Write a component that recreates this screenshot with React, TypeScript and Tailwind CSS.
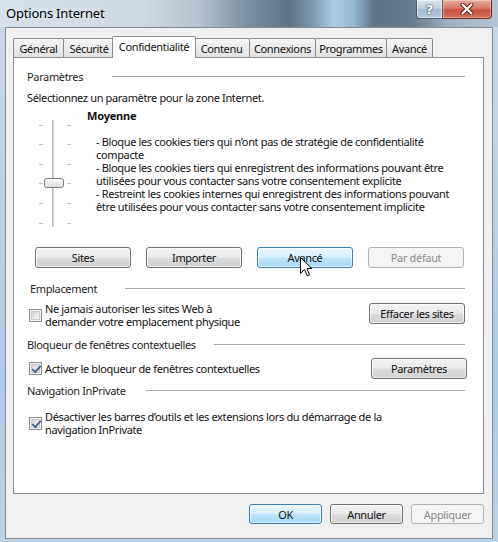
import React from "react";

const FONT = "font-['Noto_Sans',sans-serif]";

type BtnVariant = "normal" | "focus" | "disabled";

function Btn({
  children,
  w,
  h = "h-[21px]",
  variant = "normal",
  extra = "",
}: {
  children: React.ReactNode;
  w: string;
  h?: string;
  variant?: BtnVariant;
  extra?: string;
}) {
  const base = `${w} ${h} rounded-[3px] border flex items-center justify-center shrink-0 whitespace-nowrap ${extra}`;
  if (variant === "focus")
    return (
      <div
        className={`${base} border-[#3c7fb1] bg-[linear-gradient(#eaf6fd_0%,#d9f0fc_48%,#bee6fd_52%,#a7d9f5_100%)] shadow-[inset_0_0_0_1px_rgba(255,255,255,0.6)] text-[#111]`}
      >
        {children}
      </div>
    );
  if (variant === "disabled")
    return (
      <div className={`${base} border-[#adb2b5] bg-[#f4f4f4] text-[#8a8a8a]`}>
        {children}
      </div>
    );
  return (
    <div
      className={`${base} border-[#707070] bg-[linear-gradient(#f2f2f2_0%,#ebebeb_48%,#dddddd_52%,#cfcfcf_100%)] shadow-[inset_0_0_0_1px_rgba(255,255,255,0.7)] text-[#111]`}
    >
      {children}
    </div>
  );
}

function Checkbox({ checked }: { checked: boolean }) {
  return (
    <div className="w-[13px] h-[13px] border border-[#8e8f8f] bg-[#f4f4f4] p-[1px] shrink-0">
      <div className="w-full h-full border border-[#c9c9c9] bg-[linear-gradient(135deg,#cfcfcf_0%,#ececec_60%,#f8f8f8_100%)] relative">
        {checked && (
          <svg
            width="11"
            height="11"
            viewBox="0 0 11 11"
            className="absolute left-[-1px] top-[-1px]"
          >
            <path
              d="M1.8 5.6 L4.3 8.2 L9.2 2.4"
              fill="none"
              stroke="#4a5d8f"
              strokeWidth="1.9"
              strokeLinecap="round"
              strokeLinejoin="round"
            />
          </svg>
        )}
      </div>
    </div>
  );
}

function GroupHeader({
  label,
  gap,
  extra = "",
}: {
  label: string;
  gap: string;
  extra?: string;
}) {
  return (
    <div className={`flex items-center h-[13px] ${extra}`}>
      <span className="whitespace-nowrap text-[#1e1e1e]">{label}</span>
      <div className={`flex-1 h-px bg-[#a8a8a8] ${gap}`} />
    </div>
  );
}

function Slider() {
  const ticks = [16, 35, 55, 74, 94, 114];
  return (
    <svg width="60" height="120" viewBox="0 0 60 120" className="shrink-0">
      <rect x="25" y="11" width="2" height="107" fill="#d4d4d4" />
      <rect x="25" y="11" width="1" height="107" fill="#b9b9b9" />
      {ticks.map((t) => (
        <g key={t}>
          <rect x="12" y={t} width="4" height="1" fill="#c2c2c2" />
          <rect x="40" y={t} width="4" height="1" fill="#c2c2c2" />
        </g>
      ))}
      <defs>
        <linearGradient id="thumb" x1="0" y1="0" x2="0" y2="1">
          <stop offset="0" stopColor="#fbfbfb" />
          <stop offset="0.5" stopColor="#ececec" />
          <stop offset="1" stopColor="#d8d8d8" />
        </linearGradient>
      </defs>
      <rect
        x="17.5"
        y="69.5"
        width="19"
        height="9"
        rx="2"
        fill="url(#thumb)"
        stroke="#7a7a7a"
      />
    </svg>
  );
}

const tabBase =
  "h-[19px] border-l border-t border-r border-[#898c95] rounded-t-[2px] bg-[linear-gradient(#f5f5f5_0%,#ececec_50%,#e1e1e1_100%)] flex items-center justify-center text-[#111] whitespace-nowrap -ml-px";

export default function App() {
  return (
    <div
      className={`${FONT} relative w-[498px] h-[542px] overflow-hidden bg-[linear-gradient(180deg,#c9d7e4_0%,#bcd0e3_40%,#aecbe6_70%,#bdd1e3_100%)] text-[11px] leading-[13px] tracking-[-0.35px] text-[#111]`}
    >
      {/* Title bar */}
      <div className="h-[27px] flex items-start justify-between bg-[linear-gradient(90deg,#d5e0ea_0%,#cfd9e3_28%,#b4c2ce_40%,#7a8e9e_50%,#5f7484_58%,#7f9aae_63%,#a8cbe6_67%,#98b8d0_71%,#607485_75%,#687c8c_83%,#9fb1c0_90%,#b4c4d2_100%)]">
        <div className="mt-[5px] ml-[6px] text-[13px] leading-[16px] tracking-[-0.2px] text-black [text-shadow:0_0_6px_rgba(255,255,255,0.9)]">
          Options Internet
        </div>
        <div className="flex mr-[6px]">
          <div className="w-[27px] h-[19px] border border-[#4c5c6c] border-t-0 rounded-bl-[4px] bg-[linear-gradient(#d9e4ee_0%,#c3d1de_45%,#a9bccd_55%,#b9ccdc_100%)] shadow-[inset_0_0_0_1px_rgba(255,255,255,0.5)] flex items-center justify-center">
            <span className="font-['DejaVu_Sans',sans-serif] font-bold text-[13px] leading-[13px] tracking-normal text-white [text-shadow:0_0_1px_#2a3744,0_0_2px_#2a3744]">
              ?
            </span>
          </div>
          <div className="w-[49px] h-[19px] border border-[#6d2a22] border-t-0 border-l-0 rounded-br-[4px] bg-[linear-gradient(#e9a99c_0%,#d77b69_45%,#c7503d_55%,#d2705b_100%)] shadow-[inset_0_0_0_1px_rgba(255,255,255,0.35)] flex items-center justify-center">
            <svg width="14" height="12" viewBox="0 0 14 12">
              <path
                d="M2.5 1.5 L11.5 10.5 M11.5 1.5 L2.5 10.5"
                stroke="#5a1d14"
                strokeWidth="4"
                strokeLinecap="round"
              />
              <path
                d="M2.5 1.5 L11.5 10.5 M11.5 1.5 L2.5 10.5"
                stroke="#ffffff"
                strokeWidth="2.2"
                strokeLinecap="round"
              />
            </svg>
          </div>
        </div>
      </div>

      {/* Client area */}
      <div className="ml-[5px] w-[488px] h-[512px] border border-[#7f8c98] bg-[#f0f0f0] pt-[8px] pl-[7px] flex flex-col">
        {/* Tabs */}
        <div className="flex items-end h-[21px] relative z-10">
          <div className={`${tabBase} w-[51px] ml-0`}>Général</div>
          <div className={`${tabBase} w-[52px]`}>Sécurité</div>
          <div className="relative z-10 w-[84px] h-[22px] -mb-px ml-[-3px] border-l border-t border-r border-[#898c95] rounded-t-[2px] bg-white flex items-center justify-center pb-[3px] text-[#111] whitespace-nowrap">
            Confidentialité
          </div>
          <div className={`${tabBase} w-[57px] ml-[-3px]`}>Contenu</div>
          <div className={`${tabBase} w-[67px]`}>Connexions</div>
          <div className={`${tabBase} w-[72px]`}>Programmes</div>
          <div className={`${tabBase} w-[47px]`}>Avancé</div>
        </div>

        {/* Tab panel */}
        <div className="w-[471px] h-[437px] border border-[#898c95] bg-white pl-[13px] pr-[18px] pt-[12px] flex flex-col">
          <GroupHeader label="Paramètres" gap="ml-[29px]" />
          <div className="mt-[8px] whitespace-nowrap">
            Sélectionnez un paramètre pour la zone Internet.
          </div>

          <div className="mt-[5px] flex h-[120px]">
            <Slider />
            <div className="flex flex-col whitespace-nowrap">
              <div className="font-bold tracking-[-0.2px]">Moyenne</div>
              <div className="mt-[13px] pl-[9px]">
                <div>
                  - Bloque les cookies tiers qui n’ont pas de stratégie de
                  confidentialité
                </div>
                <div>compacte</div>
                <div>
                  - Bloque les cookies tiers qui enregistrent des informations
                  pouvant être
                </div>
                <div>
                  utilisées pour vous contacter sans votre consentement
                  explicite
                </div>
                <div>
                  - Restreint les cookies internes qui enregistrent des
                  informations pouvant
                </div>
                <div>
                  être utilisées pour vous contacter sans votre consentement
                  implicite
                </div>
              </div>
            </div>
          </div>

          <div className="mt-[18px] pl-[8px] flex gap-[15px]">
            <Btn w="w-[96px]">Sites</Btn>
            <Btn w="w-[96px]">Importer</Btn>
            <Btn w="w-[96px]" variant="focus">
              Avancé
            </Btn>
            <Btn w="w-[96px]" variant="disabled">
              Par défaut
            </Btn>
          </div>

          <GroupHeader
            label="Emplacement"
            gap="ml-[28px]"
            extra="mt-[14px] pl-[3px]"
          />
          <div className="mt-[7px] flex items-start justify-between">
            <div className="flex items-center gap-[3px] pl-[2px] whitespace-nowrap">
              <Checkbox checked={false} />
              <div>
                <div>Ne jamais autoriser les sites Web à</div>
                <div>demander votre emplacement physique</div>
              </div>
            </div>
            <Btn w="w-[96px]" extra="mt-[1px]">
              Effacer les sites
            </Btn>
          </div>

          <GroupHeader
            label="Bloqueur de fenêtres contextuelles"
            gap="ml-[18px]"
            extra="mt-[10px]"
          />
          <div className="mt-[7px] flex items-center justify-between">
            <div className="flex items-center gap-[3px] pl-[2px] whitespace-nowrap">
              <Checkbox checked={true} />
              <div>Activer le bloqueur de fenêtres contextuelles</div>
            </div>
            <Btn w="w-[96px]" extra="mr-[-2px]">
              Paramètres
            </Btn>
          </div>

          <GroupHeader
            label="Navigation InPrivate"
            gap="ml-[20px]"
            extra="mt-[5px]"
          />
          <div className="mt-[13px] flex items-center gap-[3px] pl-[2px] whitespace-nowrap">
            <Checkbox checked={true} />
            <div>
              <div>
                Désactiver les barres d’outils et les extensions lors du
                démarrage de la
              </div>
              <div>navigation InPrivate</div>
            </div>
          </div>
        </div>

        {/* Bottom buttons */}
        <div className="mt-[10px] w-[471px] flex justify-end gap-[8px]">
          <Btn
            w="w-[73px]"
            h="h-[20px]"
            variant="focus"
            extra="shadow-[0_0_2px_rgba(60,127,177,0.6)]"
          >
            OK
          </Btn>
          <Btn w="w-[73px]" h="h-[20px]">
            Annuler
          </Btn>
          <Btn w="w-[73px]" h="h-[20px]" variant="disabled">
            Appliquer
          </Btn>
        </div>
      </div>

      {/* Mouse cursor */}
      <svg
        width="13"
        height="20"
        viewBox="0 0 13 20"
        className="absolute left-[300px] top-[257px]"
      >
        <path
          d="M0.5 0.5 L0.5 16.5 L4.5 12.5 L7.3 18.8 L9.6 17.8 L6.9 11.6 L12 11.6 Z"
          fill="#ffffff"
          stroke="#000000"
          strokeWidth="1"
          strokeLinejoin="miter"
        />
      </svg>
    </div>
  );
}
